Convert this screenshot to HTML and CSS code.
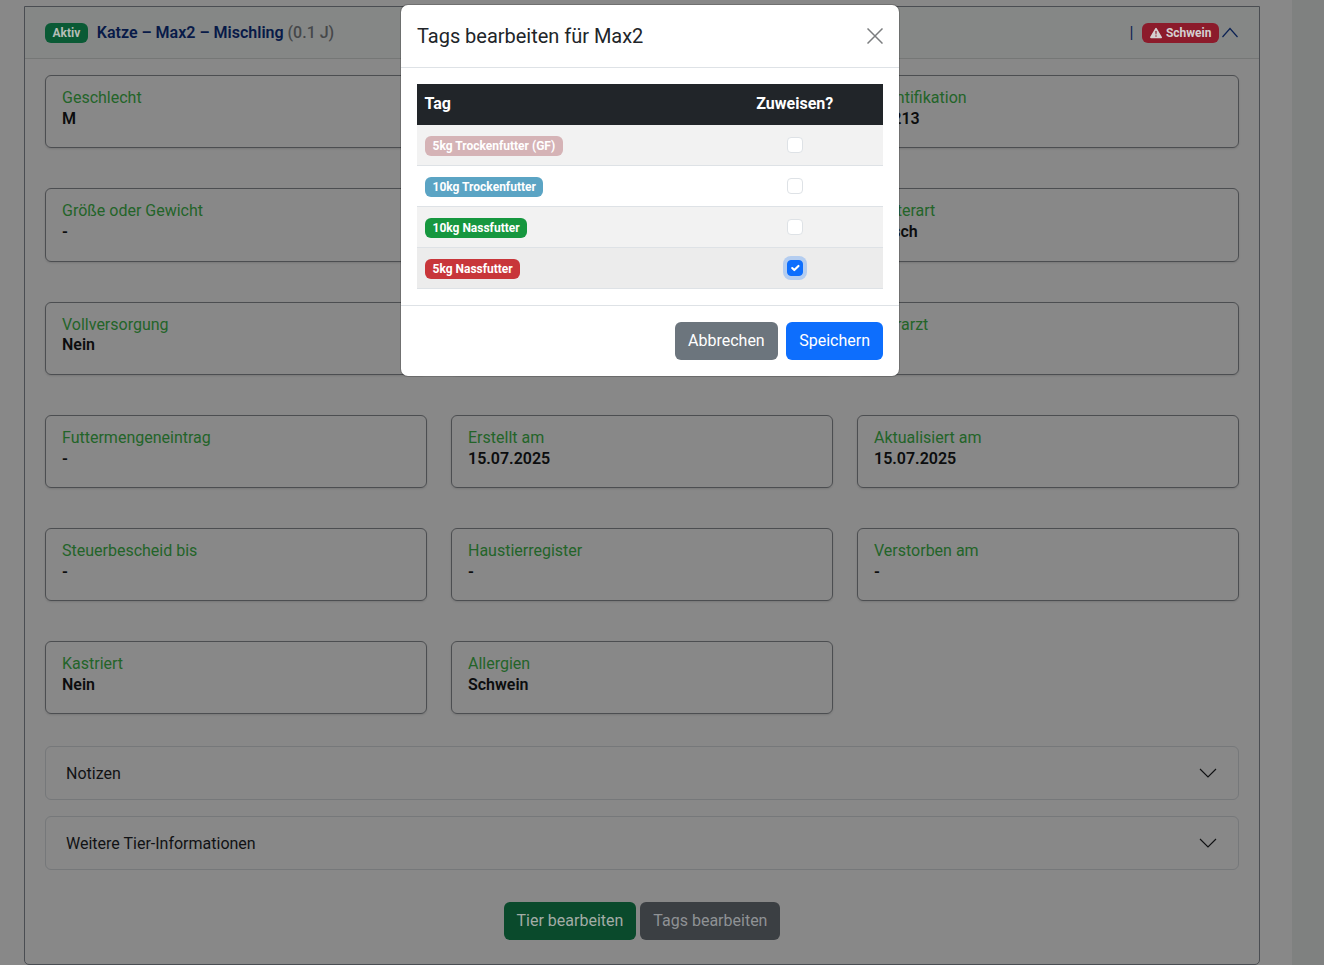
FILE: index.html
```html
<!DOCTYPE html>
<html lang="de">
<head>
<meta charset="utf-8">
<title>Tags bearbeiten</title>
<link rel="stylesheet" href="styles.css">
</head>
<body>
<div class="page">
  <main class="main">
    <section class="card">
      <header class="card-head">
        <div class="head-left">
          <span class="badge badge-active">Aktiv</span>
          <span class="pet-title">Katze – Max2 – Mischling <span class="pet-age">(0.1 J)</span></span>
        </div>
        <div class="head-right">
          <span class="sep">|</span>
          <span class="badge badge-allergy">
            <svg class="warn" viewBox="0 0 16 16" aria-hidden="true"><path d="M8.982 1.566a1.13 1.13 0 0 0-1.96 0L.165 13.233c-.457.778.091 1.767.98 1.767h13.713c.889 0 1.438-.99.98-1.767L8.982 1.566zM8 5c.535 0 .954.462.9.995l-.35 3.507a.552.552 0 0 1-1.1 0L7.1 5.995A.905.905 0 0 1 8 5zm.002 6a1 1 0 1 1 0 2 1 1 0 0 1 0-2z"/></svg>
            Schwein
          </span>
          <svg class="chev-up" viewBox="0 0 16 16" aria-hidden="true"><path d="M.5 12 8 3.5 15.5 12"/></svg>
        </div>
      </header>
      <div class="card-body">
        <div class="fields">
          <div class="field"><div class="f-label">Geschlecht</div><div class="f-value">M</div></div>
          <div class="field"></div>
          <div class="field"><div class="f-label">Identifikation</div><div class="f-value">12213</div></div>
          <div class="field"><div class="f-label">Größe oder Gewicht</div><div class="f-value">-</div></div>
          <div class="field"></div>
          <div class="field"><div class="f-label">Futterart</div><div class="f-value">Misch</div></div>
          <div class="field"><div class="f-label">Vollversorgung</div><div class="f-value">Nein</div></div>
          <div class="field"></div>
          <div class="field"><div class="f-label">Tierarzt</div><div class="f-value">-</div></div>
          <div class="field"><div class="f-label">Futtermengeneintrag</div><div class="f-value">-</div></div>
          <div class="field"><div class="f-label">Erstellt am</div><div class="f-value">15.07.2025</div></div>
          <div class="field"><div class="f-label">Aktualisiert am</div><div class="f-value">15.07.2025</div></div>
          <div class="field"><div class="f-label">Steuerbescheid bis</div><div class="f-value">-</div></div>
          <div class="field"><div class="f-label">Haustierregister</div><div class="f-value">-</div></div>
          <div class="field"><div class="f-label">Verstorben am</div><div class="f-value">-</div></div>
          <div class="field"><div class="f-label">Kastriert</div><div class="f-value">Nein</div></div>
          <div class="field"><div class="f-label">Allergien</div><div class="f-value">Schwein</div></div>
        </div>
        <div class="accordion">
          <div class="acc-item"><span>Notizen</span><svg class="chev" viewBox="0 0 16 16" aria-hidden="true"><path d="M1.6 4.8 8 11.2l6.4-6.4"/></svg></div>
          <div class="acc-item"><span>Weitere Tier-Informationen</span><svg class="chev" viewBox="0 0 16 16" aria-hidden="true"><path d="M1.6 4.8 8 11.2l6.4-6.4"/></svg></div>
        </div>
        <div class="actions">
          <button class="btn btn-dim-green" type="button">Tier bearbeiten</button>
          <button class="btn btn-dim-grey" type="button">Tags bearbeiten</button>
        </div>
      </div>
    </section>
  </main>
  <div class="scroll-track"></div>
</div>

<div class="modal" role="dialog" aria-label="Tags bearbeiten für Max2">
  <div class="modal-head">
    <h2 class="modal-title">Tags bearbeiten für Max2</h2>
    <svg class="close" viewBox="0 0 16 16" aria-hidden="true"><path d="M.5.5l15 15M15.5.5l-15 15"/></svg>
  </div>
  <div class="modal-body">
    <table class="tags">
      <thead><tr><th>Tag</th><th class="col-check">Zuweisen?</th></tr></thead>
      <tbody>
        <tr class="stripe"><td class="col-tag"><span class="badge tag-rose">5kg Trockenfutter (GF)</span></td><td class="col-check"><input class="check" type="checkbox"></td></tr>
        <tr><td class="col-tag"><span class="badge tag-blue">10kg Trockenfutter</span></td><td class="col-check"><input class="check" type="checkbox"></td></tr>
        <tr class="stripe"><td class="col-tag"><span class="badge tag-green">10kg Nassfutter</span></td><td class="col-check"><input class="check" type="checkbox"></td></tr>
        <tr class="hovered"><td class="col-tag"><span class="badge tag-red">5kg Nassfutter</span></td><td class="col-check"><input class="check focused" type="checkbox" checked></td></tr>
      </tbody>
    </table>
  </div>
  <div class="modal-foot">
    <button class="btn btn-secondary" type="button">Abbrechen</button>
    <button class="btn btn-primary" type="button">Speichern</button>
  </div>
</div>
</body>
</html>
```
FILE: styles.css
```css
* { box-sizing: border-box; }
html, body { margin: 0; height: 100%; overflow: hidden; }
body {
  font-family: Roboto, "Liberation Sans", sans-serif;
  font-size: 16px;
  color: #111214;
  background: #888888;
}
.page { display: flex; height: 965px; }
.main { width: 1292px; padding: 6px 32px 0 24px; flex: none; }
.scroll-track { flex: 1; background: #7f8180; }

.card {
  height: 959px;
  border: 1px solid #4a4d52;
  border-radius: 0 0 5px 5px;
  overflow: hidden;
}
.card-head {
  height: 52px;
  padding: 0 20px;
  display: flex;
  align-items: center;
  justify-content: space-between;
  background: #858786;
  border-bottom: 1px solid #757776;
}
.head-left { display: flex; align-items: center; gap: 9px; }
.head-right { display: flex; align-items: center; margin-right: 1px; }
.pet-title { font-weight: 600; color: #081a48; line-height: 20px; }
.pet-age { font-weight: 500; color: #46484a; }
.sep { color: #0c2254; margin-right: 9px; line-height: 20px; }

.badge {
  display: inline-flex;
  align-items: center;
  height: 20px;
  padding: 0 7.5px;
  border-radius: 6px;
  font-size: 12px;
  font-weight: 700;
  white-space: nowrap;
}
.badge-active { background: #0a5a35; color: #b4bdb7; }
.badge-allergy { background: #8c1b2b; color: #d4cfd0; gap: 4px; }
.warn { width: 12px; height: 12px; fill: #d4cfd0; }
.chev-up { width: 16px; height: 16px; margin-left: 3px; fill: none; stroke: #0c2254; stroke-width: 1.2; }

.card-body { padding: 16.2px 20px 0; }
.fields {
  display: grid;
  grid-template-columns: repeat(3, 382px);
  column-gap: 24px;
  row-gap: 40px;
}
.field {
  height: 73.2px;
  padding: 12px 16px 17.6px;
  border: 1px solid #4c4e51;
  border-radius: 6px;
  box-shadow: 0 1px 2px rgba(0, 0, 0, .12);
  line-height: 20.8px;
}
.f-label { color: #236429; }
.f-value { font-weight: 600; color: #0c0d0e; }

.accordion { margin-top: 31.8px; display: flex; flex-direction: column; gap: 16px; }
.acc-item {
  height: 54px;
  padding: 0 20px;
  display: flex;
  align-items: center;
  justify-content: space-between;
  border: 1px solid #76787a;
  border-radius: 6px;
  color: #111214;
}
.chev { width: 20px; height: 20px; fill: none; stroke: #111214; stroke-width: .9; }

.actions { margin-top: 32px; display: flex; justify-content: center; gap: 4px; }
.btn {
  height: 38px;
  padding: 0 12px;
  border: 1px solid transparent;
  border-radius: 6px;
  font: 400 16px/24px Roboto, "Liberation Sans", sans-serif;
}
.btn-dim-green { background: #0a4a2c; color: #a3aca6; }
.btn-dim-grey { background: #3b3f43; color: #8f9295; }
.btn-secondary { background: #6c757d; color: #fff; padding: 0 12.5px; }
.btn-primary { background: #0d6efd; color: #fff; }

.modal {
  position: absolute;
  top: 4px;
  left: 400px;
  width: 500px;
  background: #fff;
  border: 1px solid rgba(0, 0, 0, .175);
  border-radius: 8px;
  background-clip: padding-box;
  color: #212529;
}
.modal-head {
  height: 63px;
  padding: 0 16px;
  display: flex;
  align-items: center;
  justify-content: space-between;
  border-bottom: 1px solid #dee2e6;
}
.modal-title { margin: 0; font-size: 20px; font-weight: 400; line-height: 30px; letter-spacing: -.02px; }
.close { width: 16px; height: 16px; fill: none; stroke: #7b7d7f; stroke-width: 1.5; }
.modal-body { padding: 16px; }
.tags { width: 100%; border-collapse: collapse; table-layout: fixed; }
.tags th, .tags td { height: 41px; padding: 0 8px; text-align: left; border-bottom: 1px solid #dee2e6; }
.tags th { height: 40px; padding-left: 7.5px; background: #212529; color: #fff; font-weight: 700; border-bottom-color: #212529; }
.tags .col-tag { padding-top: 2px; }
.tags .col-check { width: 176px; text-align: center; }
.stripe td { background: #f2f2f2; }
.hovered td { background: #ececec; }
.check {
  appearance: none;
  display: block;
  width: 16px;
  height: 16px;
  margin: 0 auto;
  background: #fff;
  border: 1px solid #dee2e6;
  border-radius: 4px;
}
.check:checked {
  background: #0d6efd url("data:image/svg+xml,%3csvg xmlns='http://www.w3.org/2000/svg' viewBox='0 0 20 20'%3e%3cpath fill='none' stroke='%23fff' stroke-linecap='round' stroke-linejoin='round' stroke-width='3' d='m6 10 3 3 6-6'/%3e%3c/svg%3e") center / 100% no-repeat;
  border-color: #0d6efd;
}
.focused { box-shadow: 0 0 0 4px rgba(13, 110, 253, .25); }
.tag-rose { background: #d5b3b6; color: #fff; }
.tag-blue { background: #5ba4c4; color: #fff; }
.tag-green { background: #16973f; color: #fff; }
.tag-red { background: #c8363a; color: #fff; }
.modal-foot {
  padding: 16px;
  display: flex;
  justify-content: flex-end;
  gap: 8px;
  border-top: 1px solid #dee2e6;
}
```
